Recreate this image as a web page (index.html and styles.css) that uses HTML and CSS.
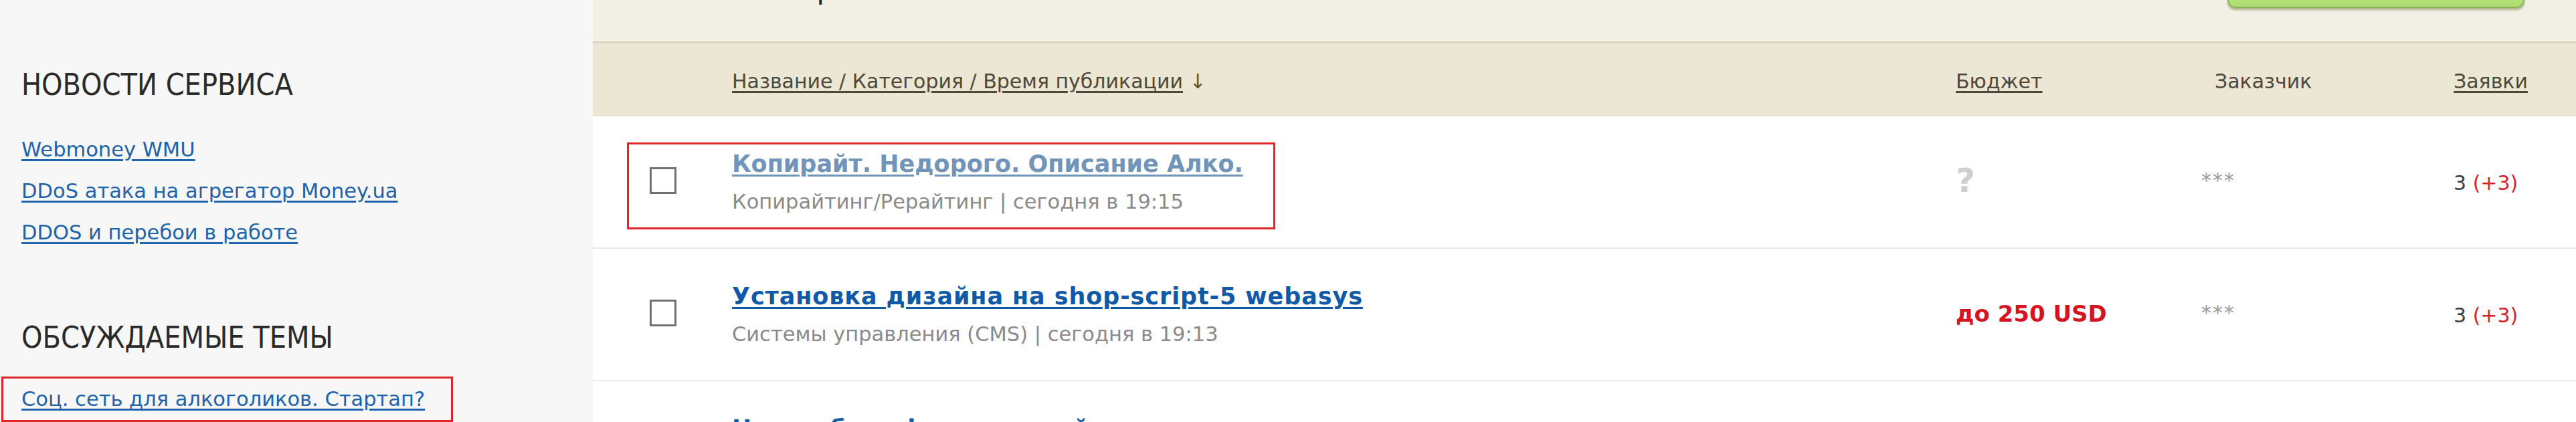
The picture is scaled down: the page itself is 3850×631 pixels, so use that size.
FILE: index.html
```html
<!DOCTYPE html>
<html lang="ru">
<head>
<meta charset="utf-8">
<title>Проекты</title>
<link rel="stylesheet" href="styles.css">
</head>
<body>
<div class="page">
  <aside class="sidebar">
    <h2 class="side-title">НОВОСТИ СЕРВИСА</h2>
    <ul class="side-links">
      <li><a href="#">Webmoney WMU</a></li>
      <li><a href="#">DDoS атака на агрегатор Money.ua</a></li>
      <li><a href="#">DDOS и перебои в работе</a></li>
    </ul>
    <h2 class="side-title side-title-second">ОБСУЖДАЕМЫЕ ТЕМЫ</h2>
    <div class="hl-box"><a href="#">Соц. сеть для алкоголиков. Стартап?</a></div>
  </aside>

  <main class="main">
    <div class="topbar">
      <h1 class="page-title">Все проекты</h1>
      <span class="add-btn" aria-label="Добавить проект"></span>
    </div>

    <div class="thead">
      <div class="th"></div>
      <div class="th"><a href="#">Название / Категория / Время публикации</a> <span class="sort-arrow">↓</span></div>
      <div class="th"><a href="#">Бюджет</a></div>
      <div class="th th-customer">Заказчик</div>
      <div class="th"><a href="#">Заявки</a></div>
    </div>

    <div class="row">
      <div class="cell-check"><span class="checkbox"></span></div>
      <div class="cell-title">
        <div><a href="#" class="title title-visited">Копирайт. Недорого. Описание Алко.</a></div>
        <div class="meta">Копирайтинг/Рерайтинг | сегодня в 19:15</div>
      </div>
      <div class="cell-budget budget-unknown">?</div>
      <div class="cell-customer">***</div>
      <div class="cell-bids">3 <span class="bids-new">(+3)</span></div>
      <div class="mark"></div>
    </div>

    <div class="row">
      <div class="cell-check"><span class="checkbox"></span></div>
      <div class="cell-title">
        <div><a href="#" class="title title-wide">Установка дизайна на shop-script-5 webasys</a></div>
        <div class="meta">Системы управления (CMS) | сегодня в 19:13</div>
      </div>
      <div class="cell-budget budget-amount">до 250 USD</div>
      <div class="cell-customer">***</div>
      <div class="cell-bids">3 <span class="bids-new">(+3)</span></div>
    </div>

    <div class="row">
      <div class="cell-check"><span class="checkbox"></span></div>
      <div class="cell-title">
        <div><a href="#" class="title">Нужна база фирм для сайта</a></div>
        <div class="meta">Базы данных | сегодня в 19:10</div>
      </div>
      <div class="cell-budget budget-unknown">?</div>
      <div class="cell-customer">***</div>
      <div class="cell-bids">1</div>
    </div>
  </main>
</div>
</body>
</html>
```

FILE: styles.css
```css
html, body {
  margin: 0;
  padding: 0;
  height: 631px;
  overflow: hidden;
  background: #ffffff;
}

body {
  font-family: "DejaVu Sans", Verdana, sans-serif;
  font-size: 30.5px;
  color: #333333;
}

a {
  color: #1d63ad;
  text-decoration: underline;
  text-decoration-thickness: 3px;
  text-underline-offset: 4px;
}

.page {
  display: flex;
  height: 631px;
}

/* ---------- Sidebar ---------- */
.sidebar {
  flex: 0 0 886px;
  box-sizing: border-box;
  background: #f7f7f7;
  padding: 101px 0 0 32px;
}

.side-title {
  margin: 0;
  font-family: "DejaVu Sans", sans-serif;
  font-stretch: condensed;
  font-weight: normal;
  font-size: 44.5px;
  line-height: 52px;
  color: #2a2a2a;
}

.side-title-second {
  margin-top: 100px;
}

.side-links {
  list-style: none;
  margin: 40px 0 0;
  padding: 0;
  line-height: 62px;
}

.hl-box {
  margin: 32px 0 0 -30px;
  padding-left: 27px;
  width: 675px;
  box-sizing: border-box;
  border: 3px solid #e0242c;
  line-height: 62px;
}

/* ---------- Main ---------- */
.main {
  flex: 1 1 auto;
  min-width: 0;
  background: #ffffff;
}

.topbar {
  height: 62px;
  background: #f2f0e5;
  border-bottom: 2px solid #d6d2b9;
  display: flex;
  justify-content: space-between;
  align-items: flex-start;
  overflow: hidden;
}

.page-title {
  margin: -43px 0 0 210px;
  font-weight: normal;
  font-size: 44px;
  line-height: 52px;
  color: #2b2b2b;
}

.add-btn {
  display: block;
  width: 444px;
  height: 60px;
  margin: -48px 77px 0 0;
  box-sizing: border-box;
  border: 2px solid #8db357;
  border-radius: 12px;
  background: linear-gradient(#cdeb9e, #aedd70);
  box-shadow: 0 3px 3px rgba(90, 100, 40, 0.45);
}

.thead,
.row {
  display: grid;
  grid-template-columns: 208px 1829px 367px 377px 1fr;
}

.thead {
  height: 110px;
  box-sizing: border-box;
  padding-top: 40px;
  background: #ebe7d4;
  font-size: 30px;
  line-height: 36px;
  color: #4e4a3b;
}

.thead a {
  color: #4e4a3b;
}

.th-customer {
  padding-left: 20px;
}

.sort-arrow {
  color: #5b5a28;
}

.row {
  position: relative;
  height: 198px;
  box-sizing: border-box;
  border-bottom: 2px solid #ebe9e1;
  align-items: start;
  line-height: 36px;
}

.cell-check {
  padding: 76px 0 0 85px;
}

.checkbox {
  display: block;
  width: 40px;
  height: 40px;
  box-sizing: border-box;
  border: 3px solid #717171;
  background: #ffffff;
}

.cell-title {
  padding-top: 49px;
}

.title {
  font-weight: bold;
  font-size: 35px;
  line-height: 44px;
  color: #0f5aa8;
}

.title-visited {
  color: #7094ba;
}

.title-wide {
  letter-spacing: 0.9px;
}

.meta {
  margin-top: 10px;
  line-height: 50px;
  color: #8a8a8a;
}

.budget-unknown {
  padding-top: 68px;
  font-weight: bold;
  font-size: 50px;
  line-height: 56px;
  color: #cfcfcf;
}

.budget-amount {
  padding-top: 77px;
  font-weight: bold;
  font-size: 34px;
  line-height: 40px;
  color: #d6141f;
}

.cell-customer {
  padding-top: 78px;
  font-size: 30px;
  letter-spacing: 2px;
  color: #9a9a9a;
}

.cell-bids {
  padding-top: 82px;
  font-size: 30px;
  color: #3a3f48;
}

.bids-new {
  color: #d61f2b;
}

.mark {
  position: absolute;
  left: 51px;
  top: 39px;
  width: 969px;
  height: 130px;
  box-sizing: border-box;
  border: 3px solid #e0242c;
  pointer-events: none;
}
```
